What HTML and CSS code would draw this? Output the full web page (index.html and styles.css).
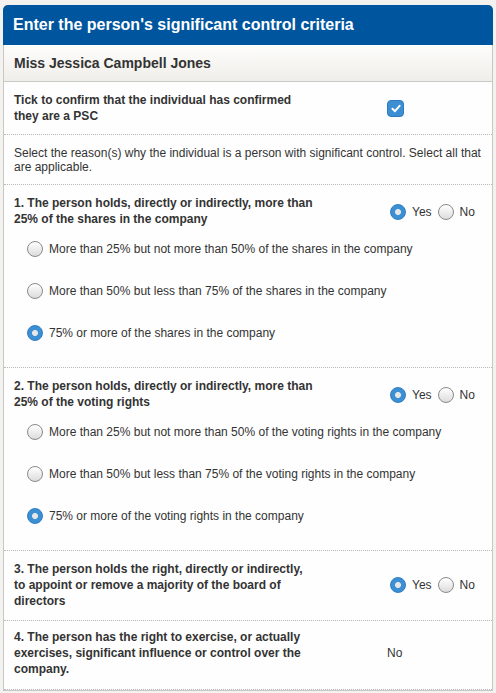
FILE: index.html
```html
<!DOCTYPE html>
<html>
<head>
<meta charset="utf-8">
<link rel="stylesheet" href="styles.css">
</head>
<body>
<div class="panel">
  <div class="panel-head">Enter the person's significant control criteria</div>
  <div class="name-row">Miss Jessica Campbell Jones</div>

  <div class="row tick">
    <div class="q">Tick to confirm that the individual has confirmed they are a PSC</div>
    <div class="ctl"><span class="check"><svg width="10" height="9" viewBox="0 0 10 9"><path d="M1.5 4.8 L4 7.2 L8.6 1.8" fill="none" stroke="#fff" stroke-width="2" stroke-linecap="round" stroke-linejoin="round"/></svg></span></div>
  </div>

  <div class="row info">Select the reason(s) why the individual is a person with significant control. Select all that are applicable.</div>

  <div class="row section">
    <div class="q">1. The person holds, directly or indirectly, more than 25% of the shares in the company</div>
    <div class="ctl"><span class="radio on"></span><span class="yn">Yes</span><span class="radio"></span><span class="yn">No</span></div>
    <div class="opts">
      <div class="opt"><span class="radio"></span>More than 25% but not more than 50% of the shares in the company</div>
      <div class="opt"><span class="radio"></span>More than 50% but less than 75% of the shares in the company</div>
      <div class="opt"><span class="radio on"></span>75% or more of the shares in the company</div>
    </div>
  </div>

  <div class="row section">
    <div class="q">2. The person holds, directly or indirectly, more than 25% of the voting rights</div>
    <div class="ctl"><span class="radio on"></span><span class="yn">Yes</span><span class="radio"></span><span class="yn">No</span></div>
    <div class="opts">
      <div class="opt"><span class="radio"></span>More than 25% but not more than 50% of the voting rights in the company</div>
      <div class="opt"><span class="radio"></span>More than 50% but less than 75% of the voting rights in the company</div>
      <div class="opt"><span class="radio on"></span>75% or more of the voting rights in the company</div>
    </div>
  </div>

  <div class="row third">
    <div class="q">3. The person holds the right, directly or indirectly, to appoint or remove a majority of the board of directors</div>
    <div class="ctl"><span class="radio on"></span><span class="yn">Yes</span><span class="radio"></span><span class="yn">No</span></div>
  </div>

  <div class="row fourth">
    <div class="q">4. The person has the right to exercise, or actually exercises, significant influence or control over the company.</div>
    <div class="ctl"><span class="val">No</span></div>
  </div>
</div>
</body>
</html>
```
FILE: styles.css
```css
html, body {
  margin: 0;
  padding: 0;
  background: #f3f2ee;
}
body {
  padding: 5px 3px 0 3px;
  font-family: "Liberation Sans", Arial, sans-serif;
  color: #333;
}
.panel {
  width: 488px;
  border: 1px solid #c8c8c8;
  border-top: none;
  border-radius: 5px 5px 0 0;
  background: #fefefe;
}
.panel-head {
  background: #00569e;
  color: #fff;
  font-weight: bold;
  font-size: 16px;
  line-height: 40px;
  height: 40px;
  padding: 0 10px;
  border-radius: 5px 5px 0 0;
  margin: 0 -1px;
}
.name-row {
  height: 36px;
  line-height: 37px;
  padding: 0 10px;
  font-size: 14px;
  font-weight: bold;
  color: #333;
  background: linear-gradient(#fdfdfc, #f0eee9);
  border-bottom: 1px solid #c8c8c8;
}
.row {
  display: grid;
  grid-template-columns: 373px 1fr;
  align-items: center;
  padding: 10px 10px 12px 10px;
  border-bottom: 1px dotted #b8b8b8;
  font-size: 12px;
}
.row.tick {
  padding: 10px 10px 10px 10px;
}
.row.info {
  display: block;
  line-height: 14px;
  padding: 11px 10px 10px 10px;
}
.row.section {
  padding: 10px 10px 13px 10px;
}
.row.third {
  padding: 10px 10px 11px 10px;
}
.row.fourth {
  padding: 8px 10px 12px 10px;
}
.q {
  width: 300px;
  font-weight: bold;
  line-height: 16px;
}
.section .q {
  margin-bottom: 1px;
}
.ctl {
  display: flex;
  align-items: center;
  font-size: 12px;
}
.ctl .radio:first-child {
  margin-left: 3px;
}
.yn {
  margin: 0 6px;
}
.opts {
  grid-column: 1 / 3;
}
.opt {
  display: flex;
  align-items: center;
  height: 42px;
  padding-left: 13px;
  line-height: 16px;
}
.opt .radio {
  margin-right: 6px;
}
.radio {
  display: inline-block;
  box-sizing: border-box;
  width: 16px;
  height: 16px;
  border-radius: 50%;
  border: 1px solid #8a8a8a;
  background: linear-gradient(#ffffff, #dcdcdc);
  flex: none;
}
.radio.on {
  border: 1px solid #2f7cc0;
  background: radial-gradient(circle, #e6e6e6 0 2.6px, #3a8fd5 3.4px);
}
.check {
  display: inline-flex;
  align-items: center;
  justify-content: center;
  box-sizing: border-box;
  width: 17px;
  height: 17px;
  border-radius: 4px;
  background: #3d8ed3;
  border: 1px solid #2f7bbd;
}
```
